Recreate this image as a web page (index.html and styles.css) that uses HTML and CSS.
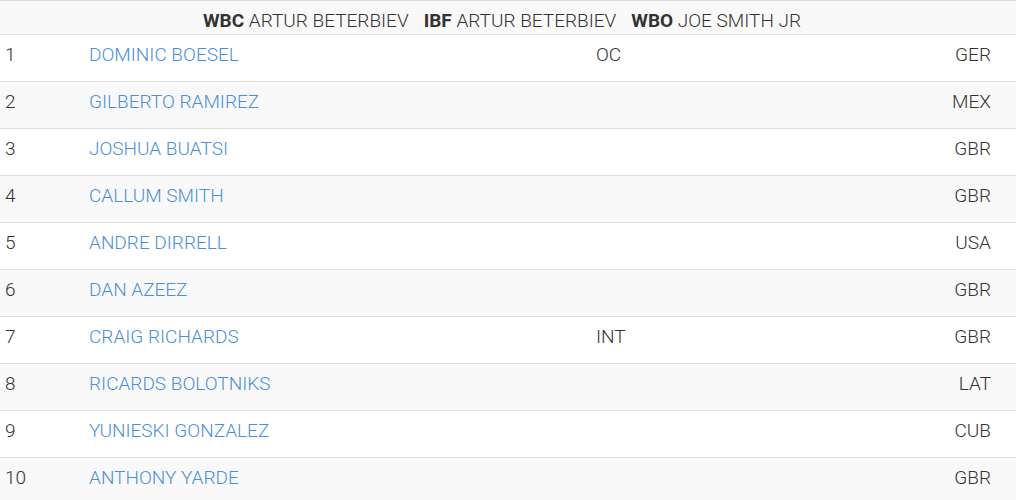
FILE: index.html
```html
<!DOCTYPE html>
<html>
<head>
<meta charset="utf-8">
<link rel="stylesheet" href="styles.css">
</head>
<body>
<div class="ranking">
  <div class="champs">
    <span class="champ"><b>WBC</b> ARTUR BETERBIEV</span>
    <span class="champ"><b>IBF</b> ARTUR BETERBIEV</span>
    <span class="champ"><b>WBO</b> JOE SMITH JR</span>
  </div>
  <div class="row"><span class="rank">1</span><a class="name" href="#">DOMINIC BOESEL</a><span class="note">OC</span><span class="country">GER</span></div>
  <div class="row"><span class="rank">2</span><a class="name" href="#">GILBERTO RAMIREZ</a><span class="note"></span><span class="country">MEX</span></div>
  <div class="row"><span class="rank">3</span><a class="name" href="#">JOSHUA BUATSI</a><span class="note"></span><span class="country">GBR</span></div>
  <div class="row"><span class="rank">4</span><a class="name" href="#">CALLUM SMITH</a><span class="note"></span><span class="country">GBR</span></div>
  <div class="row"><span class="rank">5</span><a class="name" href="#">ANDRE DIRRELL</a><span class="note"></span><span class="country">USA</span></div>
  <div class="row"><span class="rank">6</span><a class="name" href="#">DAN AZEEZ</a><span class="note"></span><span class="country">GBR</span></div>
  <div class="row"><span class="rank">7</span><a class="name" href="#">CRAIG RICHARDS</a><span class="note">INT</span><span class="country">GBR</span></div>
  <div class="row"><span class="rank">8</span><a class="name" href="#">RICARDS BOLOTNIKS</a><span class="note"></span><span class="country">LAT</span></div>
  <div class="row"><span class="rank">9</span><a class="name" href="#">YUNIESKI GONZALEZ</a><span class="note"></span><span class="country">CUB</span></div>
  <div class="row"><span class="rank">10</span><a class="name" href="#">ANTHONY YARDE</a><span class="note"></span><span class="country">GBR</span></div>
</div>
</body>
</html>
```
FILE: styles.css
```css
html, body {
  margin: 0;
  padding: 0;
  background: #fff;
}
body {
  font-family: Roboto, "Liberation Sans", sans-serif;
  font-weight: 300;
  font-size: 19px;
  color: #333;
}
.ranking {
  width: 1016px;
  border-top: 1px solid #ddd;
}
.champs {
  background: #f9f9f9;
  display: flex;
  justify-content: center;
  gap: 15px;
  padding: 9px 12px 2px 0;
  line-height: 22px;
  height: 22px;
}
.champ b {
  font-weight: 700;
}
.row {
  display: grid;
  grid-template-columns: 84px 507px 1fr auto;
  border-top: 1px solid #ddd;
  padding: 6px 25px 13px 5px;
  line-height: 27px;
  height: 27px;
}
.row:nth-child(odd) {
  background: #f9f9f9;
}
.name {
  color: #4a90d9;
  text-decoration: none;
}
.country {
  text-align: right;
}
```
